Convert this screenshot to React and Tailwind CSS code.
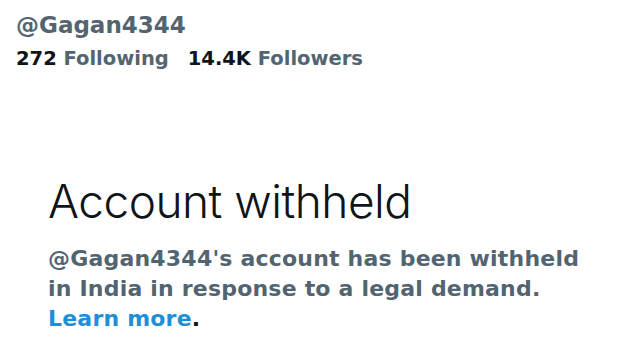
export default function App() {
  return (
    <div className="w-[640px] h-[360px] bg-white overflow-hidden font-['DejaVu_Sans',sans-serif]">
      {/* Profile header */}
      <div className="pt-[11px] pl-[16px]">
        <div className="text-[23px] leading-[28px] font-bold text-[#536471]">@Gagan4344</div>
        <div className="mt-[8px] flex gap-[19px] text-[19.5px] leading-[24px] font-bold text-[#536471]">
          <span>
            <span className="text-[#0f1419]">272</span> Following
          </span>
          <span>
            <span className="text-[#0f1419]">14.4K</span> Followers
          </span>
        </div>
      </div>

      {/* Withheld notice */}
      <div className="mt-[102px] pl-[48px]">
        <h1 className="text-[46px] leading-[56px] font-light text-[#0f1419] font-['Inter',sans-serif] tracking-[-0.5px]">
          Account withheld
        </h1>
        <p className="mt-[15px] text-[22px] leading-[30px] font-bold text-[#536471] tracking-[0.2px]">
          @Gagan4344's account has been withheld
          <br />
          in India in response to a legal demand.
          <br />
          <a className="text-[#1d8fd8]">Learn more</a>
          <span className="text-[#0f1419]">.</span>
        </p>
      </div>
    </div>
  );
}
